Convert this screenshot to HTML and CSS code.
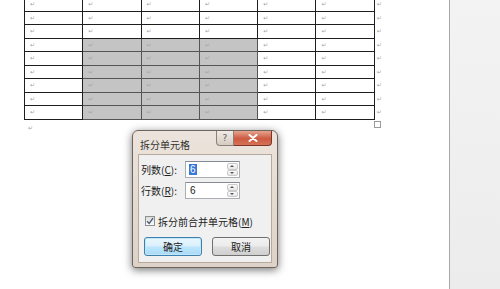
FILE: index.html
```html
<!DOCTYPE html>
<html lang="zh-CN">
<head>
  <meta charset="UTF-8">
  <title>拆分单元格</title>
  <link rel="stylesheet" href="styles.css">
</head>
<body>

  <div class="page">
    <div class="doc">
      <table class="grid" id="grid"></table>
      <div class="after-table">
        <span class="para-mark">↵</span>
        <span class="resize-handle"></span>
      </div>
    </div>
    <div class="side"></div>
  </div>

  <div class="dialog">
    <div class="titlebar">
      <span class="title">拆分单元格</span>
      <div class="controls">
        <span class="btn-help">?</span>
        <span class="btn-close">
          <svg width="10" height="8" viewBox="0 0 10 8"><path d="M1.5 1 L8.5 7 M8.5 1 L1.5 7" stroke="#fff" stroke-width="2" stroke-linecap="round"/></svg>
        </span>
      </div>
    </div>

    <div class="panel">
      <div class="field">
        <label>列数(<u>C</u>):</label>
        <div class="spin-box">
          <span class="value selected">6</span>
          <div class="spinner"><span class="up"></span><span class="down"></span></div>
        </div>
      </div>
      <div class="field">
        <label>行数(<u>R</u>):</label>
        <div class="spin-box">
          <span class="value">6</span>
          <div class="spinner"><span class="up"></span><span class="down"></span></div>
        </div>
      </div>

      <div class="check-row">
        <span class="checkbox">
          <svg width="8" height="8" viewBox="0 0 8 8"><path d="M1 4.2 L3.2 6.5 L7 1.2" fill="none" stroke="#4a5f7a" stroke-width="1.4"/></svg>
        </span>
        <span>拆分前合并单元格(<u>M</u>)</span>
      </div>

      <div class="buttons">
        <span class="button default">确定</span>
        <span class="button">取消</span>
      </div>
    </div>
  </div>

  <script>
    const rows = 9;
    const cols = 6;
    const grid = document.getElementById("grid");

    for (let r = 0; r < rows; r++) {
      const tr = document.createElement("tr");
      for (let c = 0; c < cols; c++) {
        const td = document.createElement("td");
        // selected block: rows 4-9, cols 2-4
        if (r >= 3 && c >= 1 && c <= 3) td.classList.add("shade");
        td.textContent = "↵";
        tr.appendChild(td);
      }
      const end = document.createElement("td");
      end.className = "end";
      end.textContent = "↵";
      tr.appendChild(end);
      grid.appendChild(tr);
    }
  </script>
</body>
</html>
```

FILE: styles.css
```css
body {
  margin: 0;
  background: #fff;
  font-family: "Noto Sans CJK SC", "Noto Sans", sans-serif;
  overflow: hidden;
}

.page {
  display: flex;
  height: 289px;
}

.doc {
  flex: 1;
  padding-left: 24px;
}

.side {
  width: 50px;
  border-left: 1px solid #a8a8a8;
  background: linear-gradient(#f3f3f3, #ececec);
}

/* table */

.grid {
  border-collapse: collapse;
  margin-top: -3px;
  table-layout: fixed;
}

.grid td {
  width: 52.3px;
  height: 12.5px;
  padding: 0 0 0 5px;
  border: 1px solid #1e1e1e;
  font-family: "DejaVu Sans", sans-serif;
  font-size: 6px;
  line-height: 6px;
  color: #a5a5a5;
  vertical-align: middle;
}

.grid td.shade {
  background: #c4c4c4;
  border-color: #555;
}

.grid td.end {
  width: 8px;
  border: none;
  padding-left: 2px;
}

.after-table {
  display: flex;
  justify-content: space-between;
  align-items: flex-start;
  width: 357px;
}

.para-mark {
  font-family: "DejaVu Sans", sans-serif;
  font-size: 6px;
  color: #a5a5a5;
  margin: 4px 0 0 4px;
}

.resize-handle {
  width: 5px;
  height: 5px;
  border: 1px solid #9a9a9a;
  background: #fff;
  margin-top: 1px;
}

/* dialog */

.dialog {
  position: absolute;
  left: 132px;
  top: 130px;
  width: 146px;
  height: 138px;
  box-sizing: border-box;
  border: 1px solid #6f645b;
  border-radius: 6px 6px 3px 3px;
  background: linear-gradient(#ece4dc, #ddd2c7);
  box-shadow: 0 2px 9px rgba(0,0,0,0.55);
  padding: 0 5px 4px 5px;
  display: flex;
  flex-direction: column;
}

.titlebar {
  height: 23px;
  display: flex;
  align-items: flex-start;
  flex-shrink: 0;
}

.title {
  font-size: 10px;
  color: #333;
  margin: 6px 0 0 2px;
}

.controls {
  margin-left: auto;
  display: flex;
}

.btn-help {
  width: 18px;
  height: 15px;
  box-sizing: border-box;
  border: 1px solid #8c8177;
  border-top: none;
  border-radius: 0 0 0 4px;
  background: linear-gradient(#f0ebe6, #d6cbc1);
  font-family: "DejaVu Sans", sans-serif;
  font-size: 9px;
  color: #5a5a5a;
  text-align: center;
  line-height: 14px;
}

.btn-close {
  width: 38px;
  height: 15px;
  box-sizing: border-box;
  border: 1px solid #7d3326;
  border-top: none;
  border-left: none;
  border-radius: 0 0 4px 0;
  background: linear-gradient(#e6a490, #cc5a40 55%, #d77258);
  display: flex;
  align-items: center;
  justify-content: center;
}

.panel {
  flex: 1;
  background: #f0f0f0;
  border: 1px solid #b7aa9c;
  padding: 6px 0 0 2px;
  display: flex;
  flex-direction: column;
  font-size: 10px;
  color: #222;
}

.field {
  display: flex;
  align-items: center;
  height: 17px;
  margin-bottom: 4px;
}

.field label {
  width: 44px;
}

.spin-box {
  width: 55px;
  height: 17px;
  box-sizing: border-box;
  border: 1px solid #abadb3;
  border-top-color: #868a94;
  background: #fff;
  display: flex;
  align-items: center;
  padding-left: 3px;
}

.value {
  font-family: "Liberation Sans", sans-serif;
  font-size: 10px;
  line-height: 11px;
  padding: 0 1px;
}

.value.selected {
  background: #3878d8;
  color: #fff;
}

.spinner {
  margin-left: auto;
  margin-right: 1px;
  width: 11px;
  height: 13px;
  display: flex;
  flex-direction: column;
}

.spinner span {
  flex: 1;
  border: 1px solid #c9c9c9;
  border-radius: 2px;
  background: linear-gradient(#fbfbfb, #e6e6e6);
  position: relative;
}

.spinner .up::after,
.spinner .down::after {
  content: "";
  position: absolute;
  left: 2px;
  border-left: 2.5px solid transparent;
  border-right: 2.5px solid transparent;
}

.spinner .up::after {
  top: 1px;
  border-bottom: 2.5px solid #555;
}

.spinner .down::after {
  top: 1.5px;
  border-top: 2.5px solid #555;
}

.check-row {
  display: flex;
  align-items: center;
  gap: 3px;
  margin: 12px 0 0 4px;
  height: 12px;
}

.checkbox {
  width: 10px;
  height: 10px;
  box-sizing: border-box;
  border: 1px solid #8e8f8f;
  background: linear-gradient(#dcdcdc, #fbfbfb);
  display: flex;
  align-items: center;
  justify-content: center;
}

.buttons {
  display: flex;
  gap: 10px;
  margin: 10px 0 0 3px;
}

.button {
  width: 58px;
  height: 19px;
  box-sizing: border-box;
  border: 1px solid #707070;
  border-radius: 3px;
  background: linear-gradient(#f2f2f2 0%, #ebebeb 48%, #dddddd 52%, #cfcfcf 100%);
  text-align: center;
  line-height: 17px;
  font-size: 10px;
  color: #222;
}

.button.default {
  border-color: #3c7fb1;
  box-shadow: inset 0 0 0 1px #c5e6f8;
  background: linear-gradient(#eaf6fd 0%, #d9f0fc 48%, #bee6fd 52%, #a7d9f5 100%);
}
```
